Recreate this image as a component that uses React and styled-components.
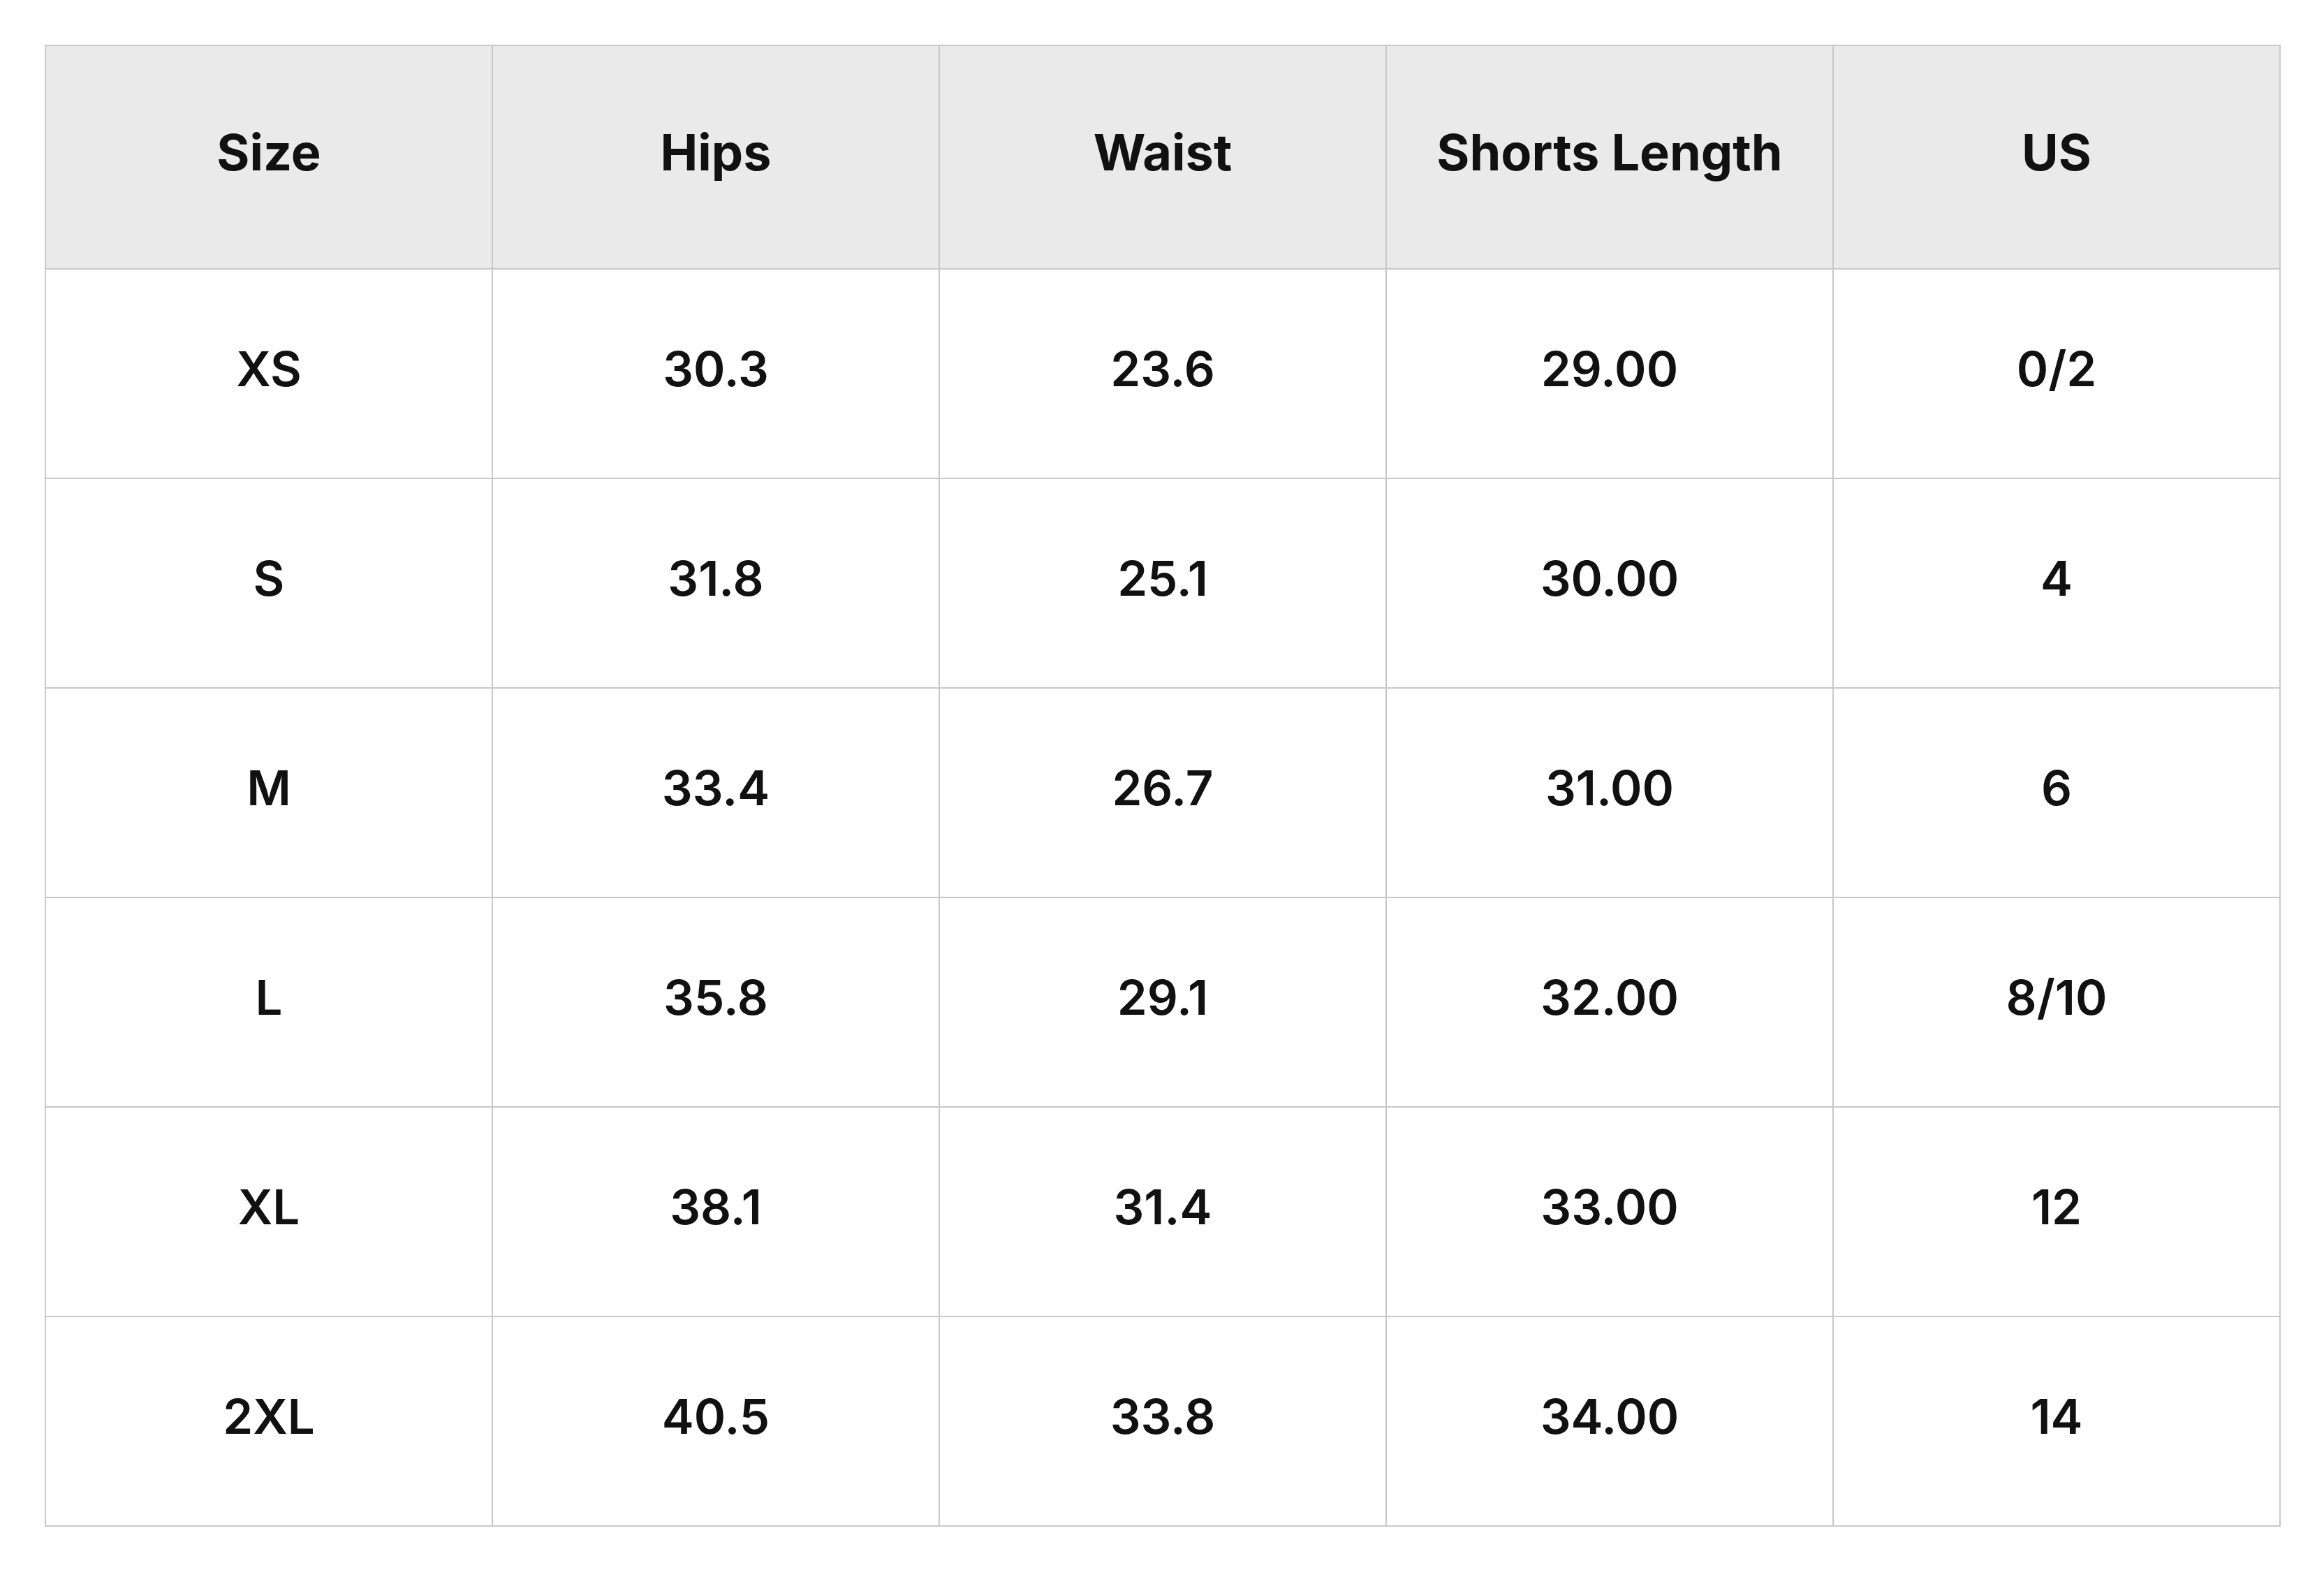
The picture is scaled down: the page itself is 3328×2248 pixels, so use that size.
import styled, { createGlobalStyle } from 'styled-components';

const GlobalStyle = createGlobalStyle`
  html, body {
    margin: 0;
    padding: 0;
    background: #ffffff;
  }
  body {
    font-family: Inter, 'Noto Sans', 'Liberation Sans', sans-serif;
    color: #111111;
  }
`;

const Page = styled.div`
  padding: 64px;
`;

const Chart = styled.div`
  display: grid;
  grid-template-columns: repeat(5, 640px);
  width: max-content;
  border-top: 2px solid #c8c8c8;
  border-left: 2px solid #c8c8c8;
`;

const Cell = styled.div`
  box-sizing: border-box;
  height: ${({ $head }) => ($head ? '320px' : '300px')};
  display: flex;
  align-items: center;
  justify-content: center;
  border-right: 2px solid #c8c8c8;
  border-bottom: 2px solid #c8c8c8;
  background: ${({ $head }) => ($head ? '#eaeaea' : '#ffffff')};
  font-size: ${({ $head }) => ($head ? '72px' : '69px')};
  font-weight: ${({ $head }) => ($head ? 700 : 600)};
  line-height: 1;
  padding-bottom: 14px;
  color: #111111;
`;

const columns = ['Size', 'Hips', 'Waist', 'Shorts Length', 'US'];

const rows = [
  ['XS', '30.3', '23.6', '29.00', '0/2'],
  ['S', '31.8', '25.1', '30.00', '4'],
  ['M', '33.4', '26.7', '31.00', '6'],
  ['L', '35.8', '29.1', '32.00', '8/10'],
  ['XL', '38.1', '31.4', '33.00', '12'],
  ['2XL', '40.5', '33.8', '34.00', '14'],
];

const App = () => (
  <Page>
    <GlobalStyle />
    <Chart role="table">
      {columns.map((c) => (
        <Cell key={c} $head role="columnheader">
          {c}
        </Cell>
      ))}
      {rows.map((r) =>
        r.map((v, i) => (
          <Cell key={r[0] + i} role="cell">
            {v}
          </Cell>
        ))
      )}
    </Chart>
  </Page>
);

export default App;
